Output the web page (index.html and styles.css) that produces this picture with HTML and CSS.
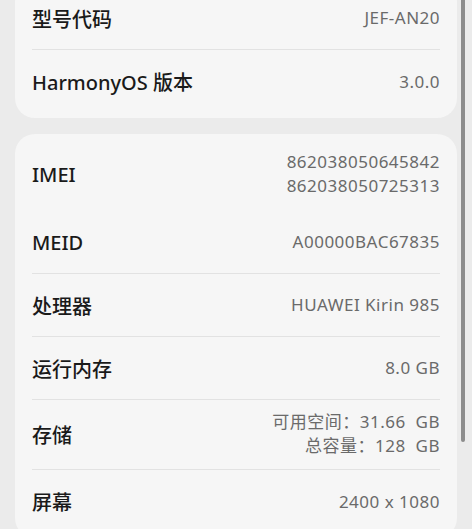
FILE: index.html
```html
<!DOCTYPE html>
<html lang="zh-CN">
  <head>
    <meta charset="UTF-8" />
    <meta name="viewport" content="width=device-width, initial-scale=1.0" />
    <title>关于手机</title>
    <link rel="stylesheet" href="styles.css">
  </head>
  <body>
    <div class="page">
      <section class="card card-top">
        <div class="row">
          <span class="label">型号代码</span>
          <span class="value">JEF-AN20</span>
        </div>
        <div class="row">
          <span class="label">HarmonyOS 版本</span>
          <span class="value">3.0.0</span>
        </div>
      </section>

      <section class="card">
        <div class="row row-tall row-first no-line">
          <span class="label">IMEI</span>
          <span class="value">862038050645842<br />862038050725313</span>
        </div>
        <div class="row">
          <span class="label">MEID</span>
          <span class="value">A00000BAC67835</span>
        </div>
        <div class="row">
          <span class="label">处理器</span>
          <span class="value">HUAWEI Kirin 985</span>
        </div>
        <div class="row">
          <span class="label">运行内存</span>
          <span class="value">8.0 GB</span>
        </div>
        <div class="row row-tall">
          <span class="label">存储</span>
          <span class="value">可用空间：31.66&nbsp; GB<br />总容量：128&nbsp; GB</span>
        </div>
        <div class="row">
          <span class="label">屏幕</span>
          <span class="value">2400 x 1080</span>
        </div>
      </section>
    </div>

    <div class="scrollbar"></div>
  </body>
</html>
```

FILE: styles.css
```css
body {
  margin: 0;
  background-color: #ebebeb;
  font-family: "Noto Sans", "Noto Sans CJK SC", sans-serif;
  overflow: hidden;
}
.page {
  padding: 0 15px;
}
.card {
  background-color: #f6f6f6;
  border-radius: 20px;
  padding: 5px 17px;
  margin-bottom: 16px;
}
.card-top {
  margin-top: -18px;
}
.row {
  display: flex;
  justify-content: space-between;
  align-items: center;
  box-sizing: border-box;
  min-height: 63px;
  padding: 11px 0;
  border-bottom: 1px solid #e2e2e2;
}
.row:last-child,
.row.no-line {
  border-bottom: none;
}
.row-tall {
  padding: 10px 0 11px;
}
.row-tall.row-first {
  padding: 11px 0 13px;
}
.label {
  font-size: 20px;
  font-weight: 500;
  color: #1a1a1a;
}
.value {
  font-size: 17px;
  line-height: 24px;
  letter-spacing: 0.5px;
  color: #6a6a6a;
  text-align: right;
}
.scrollbar {
  position: fixed;
  top: -10px;
  right: 7px;
  width: 4px;
  height: 452px;
  border-radius: 2px;
  background-color: #8c8c8c;
}
```
